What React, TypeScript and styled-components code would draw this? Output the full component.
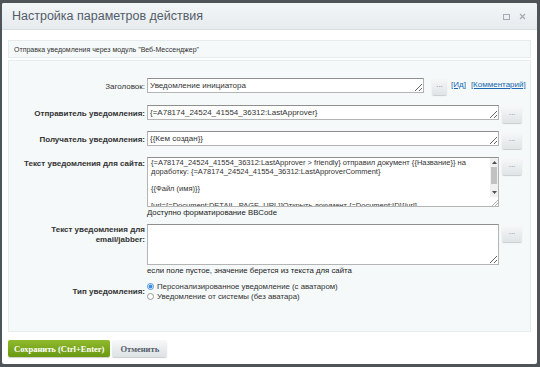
import React from 'react'
import styled, { createGlobalStyle } from 'styled-components'

const GlobalStyle = createGlobalStyle`
  html, body {
    margin: 0;
    padding: 0;
    background: #4f5459;
  }
  * {
    box-sizing: border-box;
  }
`

const Screen = styled.div`
  height: 367px;
  padding: 3px 3px 3px 2px;
  font-family: 'Liberation Sans', Arial, sans-serif;
`

const Dialog = styled.div`
  height: 361px;
  display: flex;
  flex-direction: column;
  background: #fff;
  border-radius: 2px;
  overflow: hidden;
`

const Header = styled.div`
  height: 27px;
  flex: none;
  display: flex;
  align-items: center;
  justify-content: space-between;
  padding: 0 11px 0 10px;
  background: linear-gradient(#f3f6f7, #e6ebee);
  border-bottom: 1px solid #d8dee2;
`

const Title = styled.div`
  font-size: 12.5px;
  color: #535c69;
`

const Controls = styled.div`
  display: flex;
  align-items: center;
  gap: 9px;
  color: #a3aab1;
`

const Body = styled.div`
  flex: 1;
  display: flex;
  flex-direction: column;
  padding: 10px 6px 0 6px;
`

const Subtitle = styled.div`
  height: 18px;
  display: flex;
  align-items: center;
  padding-left: 5px;
  font-size: 7px;
  color: #333;
  background: #f5f9f9;
  border: 1px solid #e6ecee;
`

const Panel = styled.div`
  margin-top: 2px;
  height: 272px;
  padding-top: 17px;
  background: #f5f9f9;
  border: 1px solid #e6ecee;
`

const Row = styled.div<{ $top?: number; $align?: string }>`
  display: grid;
  grid-template-columns: 136px 1fr;
  column-gap: 2px;
  align-items: ${({ $align }) => $align || 'start'};
  margin-top: ${({ $top }) => $top ?? 0}px;
`

const Label = styled.div<{ $bold?: boolean; $pad?: number }>`
  text-align: right;
  font-size: 8px;
  line-height: 10px;
  color: #333;
  font-weight: ${({ $bold }) => ($bold ? 'bold' : 'normal')};
  padding-top: ${({ $pad }) => $pad ?? 0}px;
`

const Field = styled.div`
  display: flex;
  flex-direction: column;
`

const FieldLine = styled.div`
  display: flex;
  align-items: flex-start;
  gap: 3px;
`

const TextBox = styled.textarea<{ $width?: number; $height?: number }>`
  display: block;
  width: ${({ $width }) => $width ?? 352}px;
  height: ${({ $height }) => $height ?? 15}px;
  margin: 0;
  padding: 1px 2px;
  font-family: 'Liberation Sans', Arial, sans-serif;
  font-size: 8px;
  line-height: 11px;
  color: #333;
  background: #fff;
  border: 1px solid #b4b4b4;
  border-top-color: #8f8f8f;
  outline: none;
  resize: both;
  overflow: hidden;
`

const ScrollFrame = styled.div`
  width: 352px;
  height: 50px;
  display: flex;
  background: #fff;
  border: 1px solid #b4b4b4;
  border-top-color: #8f8f8f;
`

const ScrollText = styled.textarea`
  flex: 1;
  display: block;
  margin: 0;
  padding: 1px 3px;
  font-family: 'Liberation Sans', Arial, sans-serif;
  font-size: 7.5px;
  line-height: 8.5px;
  color: #333;
  border: none;
  outline: none;
  resize: none;
  overflow: hidden;
`

const ScrollBar = styled.div`
  width: 8px;
  display: flex;
  flex-direction: column;
  background: #f0f0f0;
`

const ScrollArrow = styled.div`
  height: 9px;
  display: flex;
  align-items: center;
  justify-content: center;
  color: #505050;
`

const ScrollThumb = styled.div`
  height: 17px;
  margin: 0 1px;
  background: #c2c2c2;
`

const ScrollSpace = styled.div`
  flex: 1;
`

const Grip = styled.div`
  height: 9px;
  display: flex;
  align-items: flex-end;
  justify-content: flex-end;
  background: #fff;
  color: #a0a0a0;
`

const DotsButton = styled.button<{ $narrow?: boolean }>`
  width: ${({ $narrow }) => ($narrow ? 15 : 20)}px;
  height: 17px;
  margin-top: ${({ $narrow }) => ($narrow ? 0 : 1)}px;
  margin-left: ${({ $narrow }) => ($narrow ? 5 : 0)}px;
  padding: 0 0 4px;
  font-family: 'Liberation Sans', Arial, sans-serif;
  font-size: 8px;
  color: #7b858e;
  background: linear-gradient(#f7f8f9, #dfe4e7);
  border: none;
  border-radius: 2px;
  box-shadow: 0 1px 1px rgba(0, 0, 0, 0.18);
`

const Links = styled.div`
  display: flex;
  gap: 5px;
  margin-left: 1px;
  padding-top: 2px;
  font-size: 8px;
  color: #2067b0;

  span {
    text-decoration: underline;
  }
`

const Hint = styled.div`
  margin-top: 1px;
  font-size: 7.8px;
  line-height: 10px;
  color: #222;
`

const Radios = styled.div`
  display: flex;
  flex-direction: column;
  gap: 1px;
`

const RadioLine = styled.label`
  display: flex;
  align-items: center;
  gap: 3px;
  font-size: 7.8px;
  line-height: 9px;
  color: #333;
`

const RadioDot = styled.span<{ $on?: boolean }>`
  width: 7px;
  height: 7px;
  border-radius: 50%;
  border: 1px solid ${({ $on }) => ($on ? '#4a90d9' : '#9a9a9a')};
  background: ${({ $on }) => ($on ? 'radial-gradient(circle, #3e8de0 0 1.8px, #fff 2.2px)' : '#fff')};
`

const Footer = styled.div`
  display: flex;
  gap: 2px;
  padding-top: 8px;
`

const Button = styled.button<{ $primary?: boolean }>`
  height: 17px;
  padding: 0 ${({ $primary }) => ($primary ? 6 : 8)}px;
  font-family: 'Liberation Serif', 'Times New Roman', serif;
  font-size: 8.5px;
  font-weight: bold;
  color: ${({ $primary }) => ($primary ? '#fff' : '#535c69')};
  background: ${({ $primary }) =>
    $primary ? 'linear-gradient(#90ba2d, #6a9812)' : 'linear-gradient(#f7f8f9, #dde2e5)'};
  border: none;
  border-radius: 2px;
  box-shadow: 0 1px 1px rgba(0, 0, 0, 0.2);
`

const siteText =
  '{=A78174_24524_41554_36312:LastApprover > friendly} отправил документ {{Название}} на доработку: {=A78174_24524_41554_36312:LastApproverComment}\n\n{{Файл (имя)}}\n\n[url={=Document:DETAIL_PAGE_URL}]Открыть документ {=Document:ID}[/url]'

export default function App() {
  return (
    <>
      <GlobalStyle />
      <Screen>
        <Dialog>
          <Header>
            <Title>Настройка параметров действия</Title>
            <Controls>
              <svg width="7" height="7" viewBox="0 0 7 7">
                <rect x="0.5" y="1.5" width="6" height="5" fill="none" stroke="currentColor" />
              </svg>
              <svg width="7" height="7" viewBox="0 0 7 7">
                <path d="M1 1L6 6M6 1L1 6" stroke="currentColor" strokeWidth="1.2" />
              </svg>
            </Controls>
          </Header>
          <Body>
            <Subtitle>Отправка уведомления через модуль "Веб-Мессенджер"</Subtitle>
            <Panel>
              <Row $align="center">
                <Label>Заголовок:</Label>
                <FieldLine>
                  <TextBox $width={277} readOnly value="Уведомление инициатора" />
                  <DotsButton $narrow>...</DotsButton>
                  <Links>
                    <span>[Ид]</span>
                    <span>[Комментарий]</span>
                  </Links>
                </FieldLine>
              </Row>
              <Row $top={10} $align="center">
                <Label $bold>Отправитель уведомления:</Label>
                <FieldLine>
                  <TextBox readOnly value="{=A78174_24524_41554_36312:LastApprover}" />
                  <DotsButton>...</DotsButton>
                </FieldLine>
              </Row>
              <Row $top={8} $align="center">
                <Label $bold>Получатель уведомления:</Label>
                <FieldLine>
                  <TextBox readOnly value="{{Кем создан}}" />
                  <DotsButton>...</DotsButton>
                </FieldLine>
              </Row>
              <Row $top={8}>
                <Label $bold $pad={2}>
                  Текст уведомления для сайта:
                </Label>
                <Field>
                  <FieldLine>
                    <ScrollFrame>
                      <ScrollText readOnly value={siteText} />
                      <ScrollBar>
                        <ScrollArrow>
                          <svg width="5" height="3" viewBox="0 0 5 3">
                            <path d="M0 3L2.5 0L5 3Z" fill="currentColor" />
                          </svg>
                        </ScrollArrow>
                        <ScrollThumb />
                        <ScrollSpace />
                        <ScrollArrow>
                          <svg width="5" height="3" viewBox="0 0 5 3">
                            <path d="M0 0L2.5 3L5 0Z" fill="currentColor" />
                          </svg>
                        </ScrollArrow>
                        <Grip>
                          <svg width="7" height="7" viewBox="0 0 7 7">
                            <path d="M7 1L1 7M7 4L4 7" stroke="currentColor" strokeWidth="0.8" />
                          </svg>
                        </Grip>
                      </ScrollBar>
                    </ScrollFrame>
                    <DotsButton>...</DotsButton>
                  </FieldLine>
                  <Hint>Доступно форматирование BBCode</Hint>
                </Field>
              </Row>
              <Row $top={6}>
                <Label $bold $pad={1}>
                  Текст уведомления для
                  <br />
                  email/jabber:
                </Label>
                <Field>
                  <FieldLine>
                    <TextBox $height={41} readOnly value="" />
                    <DotsButton>...</DotsButton>
                  </FieldLine>
                  <Hint>если поле пустое, значение берется из текста для сайта</Hint>
                </Field>
              </Row>
              <Row $top={6} $align="center">
                <Label $bold>Тип уведомления:</Label>
                <Radios>
                  <RadioLine>
                    <RadioDot $on />
                    Персонализированное уведомление (с аватаром)
                  </RadioLine>
                  <RadioLine>
                    <RadioDot />
                    Уведомление от системы (без аватара)
                  </RadioLine>
                </Radios>
              </Row>
            </Panel>
            <Footer>
              <Button $primary>Сохранить (Ctrl+Enter)</Button>
              <Button>Отменить</Button>
            </Footer>
          </Body>
        </Dialog>
      </Screen>
    </>
  )
}
